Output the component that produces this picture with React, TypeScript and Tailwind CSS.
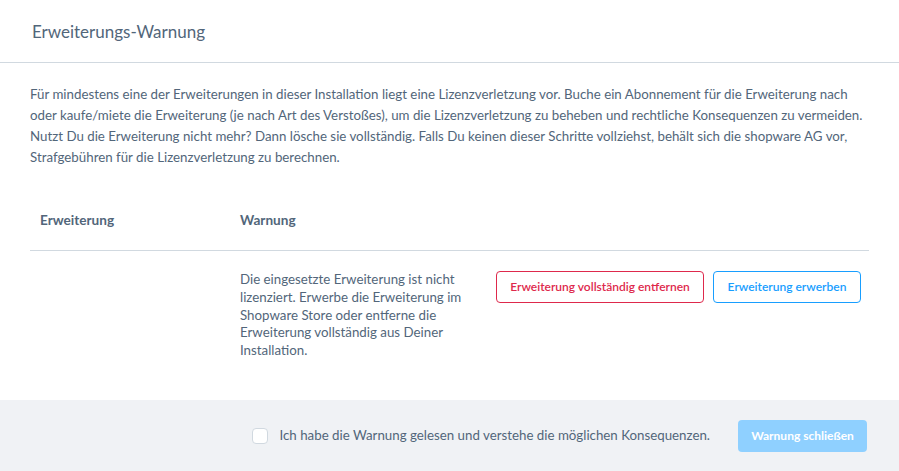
import React from "react";

export default function App() {
  return (
    <div className="w-[899px] h-[471px] bg-white flex flex-col text-[#52667a] overflow-hidden" style={{ fontFamily: "Lato, 'Noto Sans', sans-serif" }}>
      <div className="h-[63px] border-b border-[#d1d9e0] flex items-center pl-[32px] shrink-0">
        <h1 className="text-[17px] leading-none text-[#52667a]">Erweiterungs-Warnung</h1>
      </div>
      <div className="flex-1 px-[30px] pt-[21px]">
        <p className="text-[13.3px] leading-[21px]">
          Für mindestens eine der Erweiterungen in dieser Installation liegt eine Lizenzverletzung vor. Buche ein Abonnement für die Erweiterung nach oder kaufe/miete die Erweiterung (je nach Art des Verstoßes), um die Lizenzverletzung zu beheben und rechtliche Konsequenzen zu vermeiden. Nutzt Du die Erweiterung nicht mehr? Dann lösche sie vollständig. Falls Du keinen dieser Schritte vollziehst, behält sich die shopware AG vor, Strafgebühren für die Lizenzverletzung zu berechnen.
        </p>
        <div className="mt-[24px]">
          <div className="flex pt-[18px] pb-[19px] leading-[21px] border-b border-[#d1d9e0] text-[13.6px] font-bold">
            <div className="w-[200px] pl-[10px]">Erweiterung</div>
            <div className="pl-[10px]">Warnung</div>
          </div>
          <div className="flex pt-[20px]">
            <div className="w-[200px]" />
            <div className="w-[256px] pl-[10px] text-[13.3px] leading-[17.75px]">
              Die eingesetzte Erweiterung ist nicht lizenziert. Erwerbe die Erweiterung im Shopware Store oder entferne die Erweiterung vollständig aus Deiner Installation.
            </div>
            <div className="flex gap-[9px] ml-[10px] items-start">
              <button className="h-[32px] w-[208px] border border-[#de294c] rounded-[4px] text-[#de294c] text-[12px] font-semibold bg-white">Erweiterung vollständig entfernen</button>
              <button className="h-[32px] w-[148px] border border-[#189eff] rounded-[4px] text-[#189eff] text-[12px] font-semibold bg-white">Erweiterung erwerben</button>
            </div>
          </div>
        </div>
      </div>
      <div className="h-[71px] bg-[#f0f2f5] flex items-center justify-end pr-[32px] shrink-0">
        <label className="flex items-center gap-[12px] text-[13.3px]">
          <span className="w-[16px] h-[16px] bg-white border border-[#d1d9e0] rounded-[4px] inline-block" />
          <span>Ich habe die Warnung gelesen und verstehe die möglichen Konsequenzen.</span>
        </label>
        <button className="ml-[28px] h-[32px] w-[129px] rounded-[4px] bg-[#8fd0ff] text-white text-[12px] font-bold">Warnung schließen</button>
      </div>
    </div>
  );
}
